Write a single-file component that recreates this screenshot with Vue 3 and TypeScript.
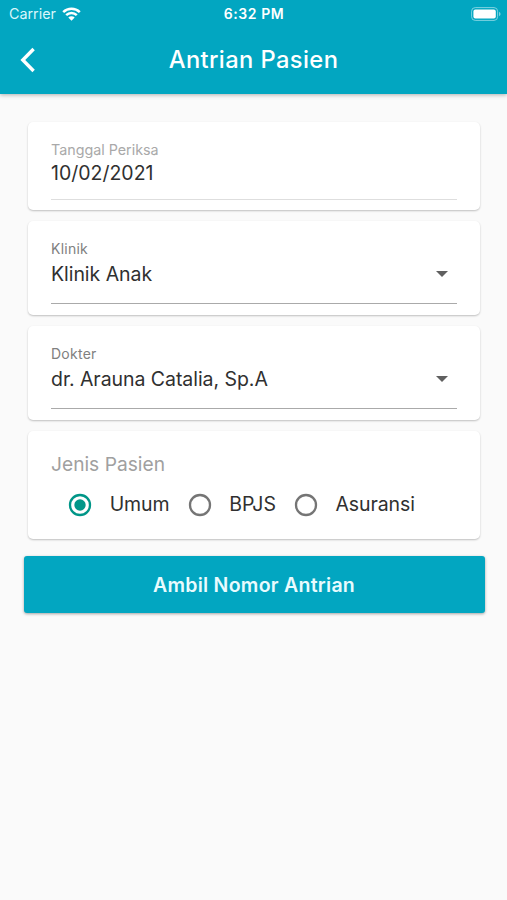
<script setup lang="ts">
import { ref } from 'vue'

interface SelectField {
  label: string
  value: string
}

const selects: SelectField[] = [
  { label: 'Klinik', value: 'Klinik Anak' },
  { label: 'Dokter', value: 'dr. Arauna Catalia, Sp.A' },
]

const patientTypes: string[] = ['Umum', 'BPJS', 'Asuransi']
const selectedType = ref<string>('Umum')
const examDate = ref<string>('10/02/2021')
</script>

<template>
  <div class="screen">
    <header class="header">
      <div class="status">
        <div class="carrier">
          <span class="carrier-name">Carrier</span>
          <svg class="wifi" viewBox="0 0 19 14" width="19" height="14">
            <path d="M1.2 5.1 A12 12 0 0 1 17.8 5.1" />
            <path d="M4.2 8.2 A7.6 7.6 0 0 1 14.8 8.2" />
            <path class="wifi-dot" d="M6.3 10.6 A4.6 4.6 0 0 1 12.7 10.6 L9.5 13.8 Z" />
          </svg>
        </div>
        <span class="time">6:32 PM</span>
        <div class="power">
          <svg viewBox="0 0 30 14" width="30" height="14">
            <rect class="cell-outline" x="0.6" y="0.6" width="26" height="12.8" rx="3.6" />
            <rect class="cell-fill" x="2.4" y="2.4" width="22.4" height="9.2" rx="2" />
            <path class="cell-tip" d="M28 4.8 Q29.6 5.6 29.6 7 Q29.6 8.4 28 9.2 Z" />
          </svg>
        </div>
      </div>
      <div class="nav">
        <button class="back" aria-label="Kembali">
          <svg viewBox="0 0 16 26" width="16" height="26">
            <path d="M13.6 2 L2.8 13 L13.6 24" />
          </svg>
        </button>
        <h1 class="title">Antrian Pasien</h1>
      </div>
    </header>

    <main class="form">
      <section class="card date-card">
        <div class="date-label"><span>Tanggal Periksa</span></div>
        <div class="value date-value"><span>{{ examDate }}</span></div>
      </section>

      <section v-for="field in selects" :key="field.label" class="card select-card">
        <div class="select-label"><span>{{ field.label }}</span></div>
        <div class="select-row">
          <span class="value">{{ field.value }}</span>
          <svg class="arrow" viewBox="0 0 12 6" width="12" height="6">
            <path d="M0 0 H12 L6 6 Z" />
          </svg>
        </div>
      </section>

      <section class="card type-card">
        <div class="type-label"><span>Jenis Pasien</span></div>
        <div class="radios">
          <div
            v-for="type in patientTypes"
            :key="type"
            class="radio"
            :class="{ checked: type === selectedType }"
            @click="selectedType = type"
          >
            <svg viewBox="0 0 24 24" width="24" height="24">
              <circle class="ring" cx="12" cy="12" r="10" />
              <circle v-if="type === selectedType" class="dot" cx="12" cy="12" r="5.7" />
            </svg>
            <span class="value">{{ type }}</span>
          </div>
        </div>
      </section>

      <button class="submit"><span>Ambil Nomor Antrian</span></button>
    </main>
  </div>
</template>

<style>
body {
  background: #fafafa;
}
</style>

<style scoped>
.screen {
  min-height: 900px;
  background: #fafafa;
  color: #303030;
  font-family: Inter, 'Liberation Sans', sans-serif;
}

.header {
  box-sizing: border-box;
  height: 94px;
  background: #02a6c1;
  color: #fff;
  box-shadow: 0 1px 4px rgba(0, 0, 0, 0.3);
}

.status {
  display: grid;
  grid-template-columns: 1fr auto 1fr;
  align-items: center;
  height: 27px;
  padding: 0 8px 0 9px;
}

.carrier {
  display: flex;
  align-items: center;
  gap: 6px;
  font-size: 14.3px;
  color: #d9f6fb;
}

.wifi {
  fill: none;
  stroke: #fff;
  stroke-width: 2.5;
}

.wifi-dot {
  fill: #fff;
  stroke: none;
}

.time {
  font-size: 14px;
  font-weight: 600;
  letter-spacing: 0.55px;
}

.power {
  display: flex;
  justify-content: flex-end;
  margin-right: -2px;
}

.cell-outline {
  fill: none;
  stroke: #7fd2e0;
  stroke-width: 1;
}

.cell-fill {
  fill: #fff;
}

.cell-tip {
  fill: #7fd2e0;
}

.nav {
  display: grid;
  grid-template-columns: 60px 1fr 60px;
  align-items: center;
  height: 66px;
}

.back {
  display: flex;
  padding: 0 0 0 20px;
  border: 0;
  background: none;
}

.back path {
  fill: none;
  stroke: #fff;
  stroke-width: 3.4;
}

.title {
  margin: 0;
  font-size: 23.7px;
  font-weight: 500;
  line-height: 30px;
  letter-spacing: 0.4px;
  text-align: center;
}

.form {
  display: flex;
  flex-direction: column;
  gap: 11px;
  padding: 28px 27px 0 28px;
}

.card {
  box-sizing: border-box;
  padding: 0 23px;
  border-radius: 5px;
  background: #fff;
  box-shadow: 0 1px 2px rgba(0, 0, 0, 0.24);
}

.value {
  font-size: 19.5px;
  line-height: 24px;
  letter-spacing: -0.05px;
}

.date-card {
  height: 88px;
  padding-top: 18px;
}

.date-label {
  font-size: 14.3px;
  line-height: 20px;
  color: #a9a9a9;
}

.date-value {
  height: 38px;
  padding-top: 1px;
  box-sizing: content-box;
  border-bottom: 1px solid #dedede;
  letter-spacing: 0;
}

.select-card {
  height: 94px;
  padding-top: 18px;
}

.select-label {
  font-size: 14px;
  line-height: 20px;
  letter-spacing: 0.25px;
  color: #808080;
}

.select-row {
  display: flex;
  align-items: center;
  justify-content: space-between;
  height: 30px;
  padding: 0 9px 14px 0;
  border-bottom: 1px solid #aaa;
}

.arrow {
  fill: #606060;
}

.type-card {
  height: 108px;
  padding-top: 21px;
}

.type-label {
  font-size: 19.2px;
  line-height: 25px;
  color: #a0a0a0;
}

.radios {
  display: flex;
  gap: 18px;
  padding: 16px 0 0 17px;
}

.radio {
  display: flex;
  align-items: center;
  gap: 18px;
}

.radio .value {
  margin-left: -0.3px;
  line-height: 22px;
  padding-bottom: 2px;
  letter-spacing: -0.1px;
}

.ring {
  fill: none;
  stroke: #757575;
  stroke-width: 2.3;
}

.checked .ring {
  stroke: #009688;
}

.dot {
  fill: #009688;
}

.submit {
  height: 57px;
  margin: 6px -4.5px 0 -4.5px;
  padding: 0;
  border: 0;
  border-radius: 3px;
  background: #02a6c1;
  color: #e9fbfe;
  font-family: inherit;
  font-size: 19.5px;
  font-weight: 600;
  letter-spacing: 0.27px;
  box-shadow: 0 1px 3px rgba(0, 0, 0, 0.35);
}
</style>
